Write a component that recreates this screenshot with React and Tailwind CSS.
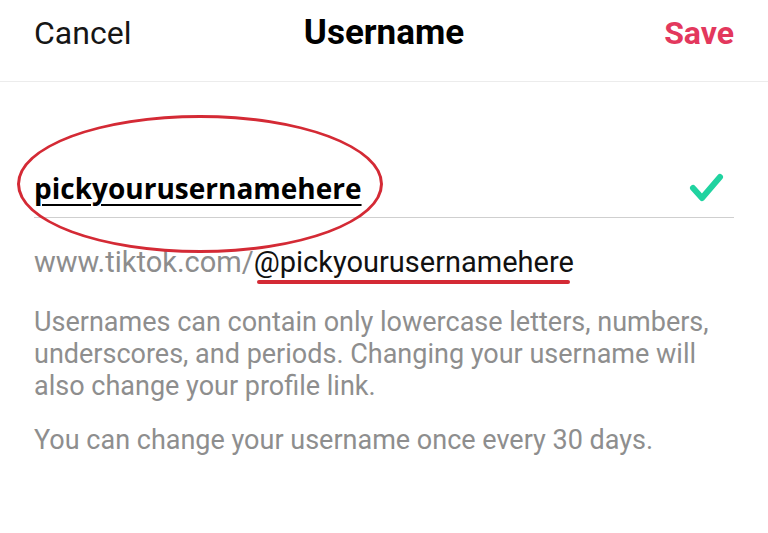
export default function App() {
  return (
    <div className="relative h-[533px] w-[768px] overflow-hidden bg-white font-['Roboto',sans-serif]">
      {/* Nav bar */}
      <div className="grid h-[82px] grid-cols-[1fr_auto_1fr] items-baseline border-b border-[#ececec] px-[34px] pt-[15px]">
        <span className="justify-self-start text-[32px] leading-none text-[#161616]">Cancel</span>
        <span className="text-[35px] font-bold leading-none text-black">Username</span>
        <span className="justify-self-end text-[32px] font-bold leading-none text-[#e3385d]">Save</span>
      </div>

      <div className="px-[34px]">
        {/* Input row */}
        <div className="mt-[89px] flex items-end justify-between border-b border-[#cfcfcf] pb-[12px]">
          <span className="font-['Open_Sans',sans-serif] text-[28px] font-bold leading-[34px] text-black underline decoration-[2px] underline-offset-[5px]">
            pickyourusernamehere
          </span>
          <svg width="35" height="32" viewBox="0 0 35 32" className="mb-[2px] mr-[10px]">
            <path d="M4 17 L13 27 L31 6" fill="none" stroke="#20d3a0" strokeWidth="6" strokeLinecap="round" strokeLinejoin="round" />
          </svg>
        </div>

        {/* Link */}
        <div className="mt-[27px] text-[29px] leading-[34px]">
          <span className="text-[#8d8d8d]">www.tiktok.com/</span>
          <span className="text-[#111]">@pickyourusernamehere</span>
        </div>

        <p className="mt-[27px] text-[27px] leading-[32px] text-[#8e8e8e]">
          Usernames can contain only lowercase letters, numbers, underscores, and periods. Changing your username will also change your profile link.
        </p>
        <p className="mt-[22px] text-[27px] leading-[32px] text-[#8e8e8e]">
          You can change your username once every 30 days.
        </p>
      </div>

      {/* Red annotations */}
      <div className="absolute left-[17px] top-[115px] h-[138px] w-[366px] rounded-[50%] border-[3px] border-[#d42a35]" />
      <div className="absolute left-[257px] top-[280px] h-[4px] w-[313px] rounded-full bg-[#d42a35]" />
    </div>
  );
}
